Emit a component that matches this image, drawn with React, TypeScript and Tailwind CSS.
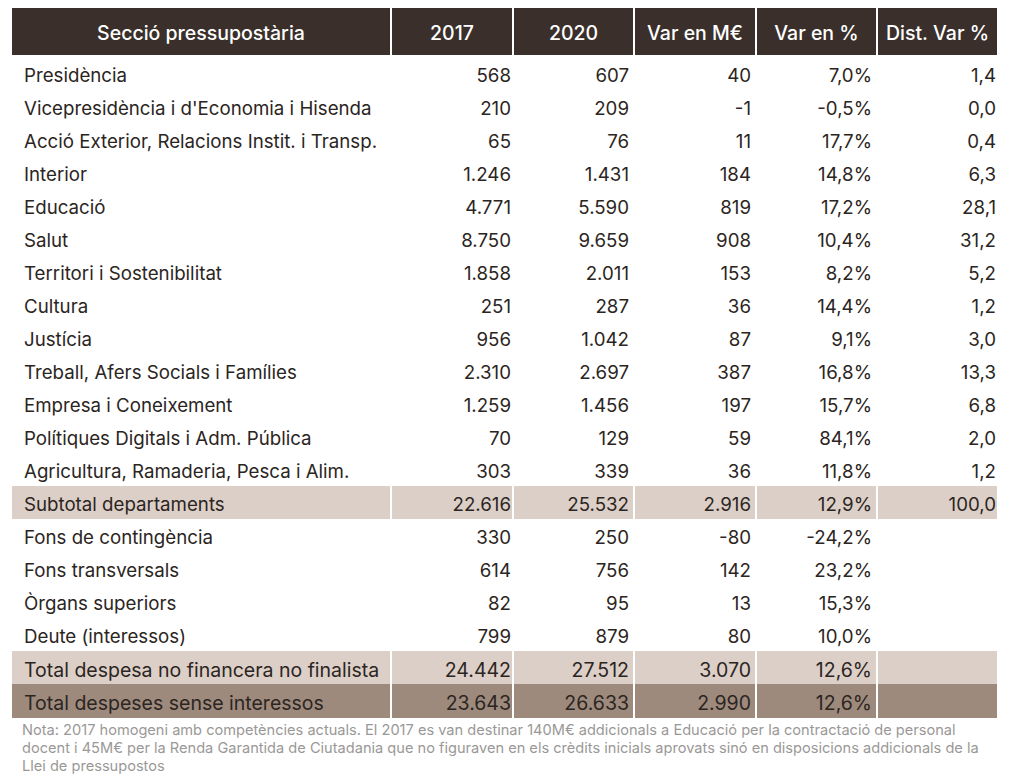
import React from 'react'

type Row = {
  name: string
  y17: string
  y20: string
  varM: string
  varP: string
  dist: string
  kind?: 'sub' | 'total1' | 'total2'
}

const rows: Row[] = [
  { name: 'Presidència', y17: '568', y20: '607', varM: '40', varP: '7,0%', dist: '1,4' },
  { name: "Vicepresidència i d'Economia i Hisenda", y17: '210', y20: '209', varM: '-1', varP: '-0,5%', dist: '0,0' },
  { name: 'Acció Exterior, Relacions Instit. i Transp.', y17: '65', y20: '76', varM: '11', varP: '17,7%', dist: '0,4' },
  { name: 'Interior', y17: '1.246', y20: '1.431', varM: '184', varP: '14,8%', dist: '6,3' },
  { name: 'Educació', y17: '4.771', y20: '5.590', varM: '819', varP: '17,2%', dist: '28,1' },
  { name: 'Salut', y17: '8.750', y20: '9.659', varM: '908', varP: '10,4%', dist: '31,2' },
  { name: 'Territori i Sostenibilitat', y17: '1.858', y20: '2.011', varM: '153', varP: '8,2%', dist: '5,2' },
  { name: 'Cultura', y17: '251', y20: '287', varM: '36', varP: '14,4%', dist: '1,2' },
  { name: 'Justícia', y17: '956', y20: '1.042', varM: '87', varP: '9,1%', dist: '3,0' },
  { name: 'Treball, Afers Socials i Famílies', y17: '2.310', y20: '2.697', varM: '387', varP: '16,8%', dist: '13,3' },
  { name: 'Empresa i Coneixement', y17: '1.259', y20: '1.456', varM: '197', varP: '15,7%', dist: '6,8' },
  { name: 'Polítiques Digitals i Adm. Pública', y17: '70', y20: '129', varM: '59', varP: '84,1%', dist: '2,0' },
  { name: 'Agricultura, Ramaderia, Pesca i Alim.', y17: '303', y20: '339', varM: '36', varP: '11,8%', dist: '1,2' },
  { name: 'Subtotal departaments', y17: '22.616', y20: '25.532', varM: '2.916', varP: '12,9%', dist: '100,0', kind: 'sub' },
  { name: 'Fons de contingència', y17: '330', y20: '250', varM: '-80', varP: '-24,2%', dist: '' },
  { name: 'Fons transversals', y17: '614', y20: '756', varM: '142', varP: '23,2%', dist: '' },
  { name: 'Òrgans superiors', y17: '82', y20: '95', varM: '13', varP: '15,3%', dist: '' },
  { name: 'Deute (interessos)', y17: '799', y20: '879', varM: '80', varP: '10,0%', dist: '' },
  { name: 'Total despesa no financera no finalista', y17: '24.442', y20: '27.512', varM: '3.070', varP: '12,6%', dist: '', kind: 'total1' },
  { name: 'Total despeses sense interessos', y17: '23.643', y20: '26.633', varM: '2.990', varP: '12,6%', dist: '', kind: 'total2' },
]

const cols = 'grid grid-cols-[378px_120px_119px_120px_119px_119px] gap-x-[2px]'

export default function App() {
  return (
    <div className="w-[1017px] h-[779px] bg-white pt-2 pl-3 font-['Inter',sans-serif] text-[#2b2522]">
      <div className="w-[985px] flex flex-col gap-[2px]">
        {/* Header */}
        <div className={`${cols} h-[47px] text-white text-[19.5px] font-medium`}>
          <div className="bg-[#3a2f2b] flex items-center justify-center pt-1">Secció pressupostària</div>
          <div className="bg-[#3a2f2b] flex items-center justify-center pt-1">2017</div>
          <div className="bg-[#3a2f2b] flex items-center justify-center pt-1">2020</div>
          <div className="bg-[#3a2f2b] flex items-center justify-center pt-1">Var en M€</div>
          <div className="bg-[#3a2f2b] flex items-center justify-center pt-1">Var en %</div>
          <div className="bg-[#3a2f2b] flex items-center justify-center pt-1">Dist. Var %</div>
        </div>

        {rows.map(r => {
          const bg =
            r.kind === 'sub' || r.kind === 'total1'
              ? 'bg-[#dccfc7]'
              : r.kind === 'total2'
              ? 'bg-[#9e8a7c]'
              : 'bg-white'
          const size = r.kind === 'total1' || r.kind === 'total2' ? 'text-[19.5px]' : 'text-[18.7px]'
          return (
            <div key={r.name} className={`${cols} h-[31px] ${size}`}>
              <div className={`${bg} flex items-center pl-3 pt-[5px] whitespace-nowrap`}>{r.name}</div>
              <div className={`${bg} flex items-center justify-end pt-[5px] pr-[1px]`}>{r.y17}</div>
              <div className={`${bg} flex items-center justify-end pt-[5px] pr-1`}>{r.y20}</div>
              <div className={`${bg} flex items-center justify-end pt-[5px] pr-1`}>{r.varM}</div>
              <div className={`${bg} flex items-center justify-end pt-[5px] pr-1`}>{r.varP}</div>
              <div className={`${r.kind ? bg : 'bg-white'} flex items-center justify-end pt-[5px] pr-[1px]`}>{r.dist}</div>
            </div>
          )
        })}
      </div>

      {/* Note */}
      <p className="w-[980px] mt-[6px] pl-[10px] text-[14.6px] leading-[18px] text-[#9a9896]">
        Nota: 2017 homogeni amb competències actuals. El 2017 es van destinar 140M€ addicionals a Educació per la contractació de personal docent i 45M€ per la Renda Garantida de Ciutadania que no figuraven en els crèdits inicials aprovats sinó en disposicions addicionals de la Llei de pressupostos
      </p>
    </div>
  )
}
